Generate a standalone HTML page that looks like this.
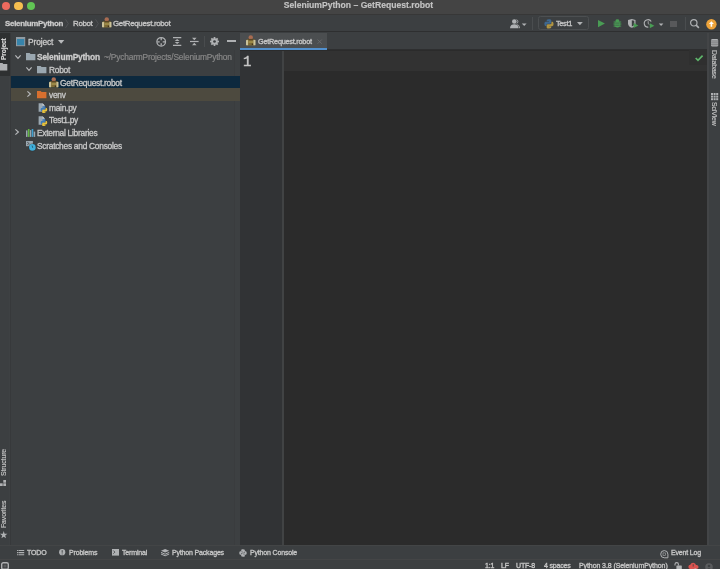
<!DOCTYPE html>
<html><head><meta charset="utf-8">
<style>
*{margin:0;padding:0;box-sizing:border-box}
html,body{width:720px;height:569px;overflow:hidden;background:#3c3f41;font-family:"Liberation Sans",sans-serif;color:#bbbbbb}
.a{position:absolute}
svg{position:absolute;overflow:visible}
.tx{position:absolute;white-space:nowrap;color:#d2d2d2;-webkit-text-stroke:0.32px #c2c2c2}
#title{left:0;top:0;width:720px;height:15.2px;background:#444444;border-bottom:1.3px solid #373737}
.dot{position:absolute;width:8.2px;height:8.2px;border-radius:50%;top:1.7px}
#nav{left:0;top:15.2px;width:720px;height:17.3px;background:#3c3f41;border-bottom:1px solid #2e2f30}
.nv{font-size:7.9px;letter-spacing:-0.31px;line-height:10px;top:4.7px}
#lstrip{z-index:2;left:0;top:32.5px;width:11px;height:512.7px;background:#3c3f41;border-right:1.6px solid #37393b;box-shadow:inset -0.8px 0 0 #404345}
#proj{left:10.5px;top:32.5px;width:229.5px;height:512.5px;background:#3c3f41}
#editor{left:240px;top:32.5px;width:467px;height:512.5px;background:#2b2b2b}
#rstrip{left:707.2px;top:32.5px;width:12.8px;height:512.7px;background:#3c3f41;border-left:2.6px solid #434547}
#bstrip{left:0;top:545.2px;width:720px;height:13.3px;background:#3c3f41;border-top:1.6px solid #434546}
#status{left:0;top:558.5px;width:720px;height:10.5px;background:#3c3f41;border-top:1.5px solid #444546}
.row{position:absolute;left:0;width:229.5px;height:12.6px}
.tr{font-size:8.4px;letter-spacing:-0.27px;line-height:12.6px;top:0.9px}
.sm{font-size:7px;letter-spacing:-0.17px;line-height:10px}
.vt{position:absolute;font-size:6.9px;line-height:8px;white-space:nowrap;transform-origin:0 0;color:#c8c8c8;-webkit-text-stroke:0.2px #bbbbbb;letter-spacing:-0.1px}
.tx,.vt{will-change:transform}</style></head><body>
<!-- title bar -->
<div id="title" class="a">
  <div class="dot" style="left:1.9px;background:#ed6a5e"></div>
  <div class="dot" style="left:14.4px;background:#f5bf4f"></div>
  <div class="dot" style="left:27px;background:#61c554"></div>
  <div class="tx" style="left:0;width:717px;top:0.2px;text-align:center;font-size:8.6px;font-weight:bold;line-height:10px;color:#c4c4c4;-webkit-text-stroke:0.15px #c4c4c4">SeleniumPython – GetRequest.robot</div>
</div>
<!-- nav bar -->
<div id="nav" class="a"><div class="a" style="left:0;top:-1.2px;width:720px;height:18px">
  <div class="tx nv" style="left:4.5px;font-weight:bold;letter-spacing:-0.26px">SeleniumPython</div>
  <svg style="left:65.2px;top:5px" width="4" height="10"><path d="M0.5 0.3 L3.3 4.6 L0.5 8.9" fill="none" stroke="#55585a" stroke-width="0.8"/></svg>
  <div class="tx nv" style="left:72.6px">Robot</div>
  <svg style="left:95px;top:5px" width="4" height="10"><path d="M0.5 0.3 L3.3 4.6 L0.5 8.9" fill="none" stroke="#55585a" stroke-width="0.8"/></svg>
  <svg style="left:101.7px;top:3.4px" width="10" height="11" viewBox="0 0 10 11">
    <ellipse cx="4.75" cy="2.5" rx="2.2" ry="2.2" fill="#a96c52"/>
    <rect x="0.6" y="4.2" width="8.3" height="6.3" rx="0.5" fill="#7d6b36"/>
    <rect x="2.3" y="3.9" width="4.9" height="1.2" fill="#5a4526"/>
    <rect x="0" y="5" width="2.1" height="5.2" rx="0.5" fill="#cbc299"/>
    <rect x="7.4" y="5" width="2.1" height="5.2" rx="0.5" fill="#cbc299"/>
    <rect x="2.5" y="6.2" width="4.5" height="1.6" fill="#a38f4c"/>
    <circle cx="6.4" cy="9.3" r="0.8" fill="#3e2c18"/>
  </svg>
  <div class="tx nv" style="left:112.7px">GetRequest.robot</div>

  <!-- right toolbar -->
  <svg style="left:510.4px;top:4.6px" width="18" height="10" viewBox="0 0 18 10">
    <circle cx="4.3" cy="2.5" r="2.3" fill="#afb1b3"/>
    <path d="M0 9.2 C0.2 6.2 2 5.3 4.3 5.3 C6.6 5.3 8.4 6.2 8.6 9.2Z" fill="#afb1b3"/>
    <path d="M6.6 0.6 a2.2 2.2 0 0 1 0 4 M7.4 5.6 c1.3 0.5 2 1.6 2.1 3.6" fill="none" stroke="#afb1b3" stroke-width="0.9"/>
    <path d="M11.8 4.4 L16.6 4.4 L14.2 7Z" fill="#afb1b3"/>
  </svg>
  <div class="a" style="left:532px;top:2.8px;width:1px;height:13px;background:#4a4d4f"></div>
  <div class="a" style="left:538.2px;top:2.2px;width:50.8px;height:14.3px;border:1px solid #4c4f51;border-radius:2.5px"></div>
  <svg style="left:544.2px;top:4.6px" width="10" height="10" viewBox="0 0 10 10"><g transform="scale(0.62)"><path d="M7.9 0.5 C4.2 0.5 4.4 2.1 4.4 2.1 L4.4 3.8 H8 V4.3 H3 C3 4.3 0.6 4 0.6 7.8 C0.6 11.5 2.7 11.4 2.7 11.4 H4 V9.6 C4 9.6 3.9 7.5 6.1 7.5 H9.7 C9.7 7.5 11.7 7.5 11.7 5.5 V2.3 C11.7 2.3 12 0.5 7.9 0.5Z" fill="#3e6890"/><path d="M8.1 15.5 C11.8 15.5 11.6 13.9 11.6 13.9 L11.6 12.2 H8 V11.7 H13 C13 11.7 15.4 12 15.4 8.2 C15.4 4.5 13.3 4.6 13.3 4.6 H12 V6.4 C12 6.4 12.1 8.5 9.9 8.5 H6.3 C6.3 8.5 4.3 8.5 4.3 10.5 V13.7 C4.3 13.7 4 15.5 8.1 15.5Z" fill="#b09442"/></g></svg>
  <div class="tx nv" style="left:556.3px;font-size:7.4px;letter-spacing:-0.35px">Test1</div>
  <svg style="left:577.2px;top:8px" width="7" height="4"><path d="M0 0 L5.8 0 L2.9 3.2Z" fill="#afb1b3"/></svg>
  <!-- run -->
  <svg style="left:597.6px;top:6px" width="8" height="8"><path d="M0 0 L6.9 3.6 L0 7.2Z" fill="#499c54"/></svg>
  <!-- debug -->
  <svg style="left:612.8px;top:4.9px" width="9" height="9" viewBox="0 0 9 9">
    <path d="M0.6 3 h7.6 M0.4 5 h8 M0.6 7.1 h7.6" stroke="#499c54" stroke-width="0.95"/>
    <ellipse cx="4.4" cy="1.7" rx="1.9" ry="1.4" fill="#499c54"/>
    <ellipse cx="4.4" cy="5.2" rx="2.8" ry="3.3" fill="#499c54"/>
    <path d="M2.2 4.1 h4.4 M2.2 6.2 h4.4" stroke="#3c3f41" stroke-width="0.5"/>
  </svg>
  <!-- coverage -->
  <svg style="left:628.3px;top:4.9px" width="11" height="10" viewBox="0 0 11 10">
    <path d="M0 0.9 L3.8 0 L7.5 0.9 L7.5 4.4 C7.5 6.7 5.8 8 3.8 8.8 C1.8 8 0 6.7 0 4.4Z" fill="#afb1b3"/>
    <path d="M3.8 1.3 L6.3 1.8 L6.3 4.4 C6.3 5.9 5.3 6.9 3.8 7.5Z" fill="#3c3f41"/>
    <path d="M5.6 4.1 L10.4 6.6 L5.6 9.1Z" fill="#499c54"/>
  </svg>
  <!-- profiler -->
  <svg style="left:643.8px;top:4.9px" width="20" height="10" viewBox="0 0 20 10">
    <path d="M7.2 2.6 A3.7 3.7 0 1 0 4.3 8.1" fill="none" stroke="#afb1b3" stroke-width="1.1"/>
    <path d="M4.2 2.2 L4.2 4.6 L5.4 5.6" fill="none" stroke="#afb1b3" stroke-width="0.9"/>
    <path d="M5.8 4.2 L10.4 6.7 L5.8 9.2Z" fill="#499c54"/>
    <path d="M14.8 4.4 L19.4 4.4 L17.1 7Z" fill="#afb1b3"/>
  </svg>
  <!-- stop -->
  <div class="a" style="left:670.4px;top:6.6px;width:6.6px;height:6.6px;background:#58595b"></div>
  <div class="a" style="left:684.5px;top:2.8px;width:1px;height:13px;background:#4a4d4f"></div>
  <!-- search -->
  <svg style="left:690.2px;top:5.2px" width="10" height="10" viewBox="0 0 10 10">
    <circle cx="3.8" cy="3.8" r="3.2" fill="none" stroke="#afb1b3" stroke-width="1.2"/>
    <path d="M6.1 6.1 L8.9 8.9" stroke="#afb1b3" stroke-width="1.6"/>
  </svg>
  <!-- update -->
  <svg style="left:705.6px;top:4.9px" width="11" height="11" viewBox="0 0 11 11">
    <circle cx="5.4" cy="5.2" r="5.2" fill="#eda33a"/>
    <path d="M5.4 2.3 L7.9 5 L6.2 5 L6.2 7.8 L4.6 7.8 L4.6 5 L2.9 5Z" fill="#ffffff"/>
  </svg>
</div></div>

<!-- left strip -->
<div id="lstrip" class="a">
  <div class="a" style="left:0;top:0px;width:9.5px;height:43px;background:#2e3031"></div>
  <div class="vt" style="left:-0.4px;top:27.8px;transform:rotate(-90deg);font-weight:bold;color:#e0e0e0;font-size:6.6px">Project</div>
  <svg style="left:0;top:30.4px" width="8" height="8" viewBox="0 0 8 8"><path d="M-0.5 0 h3 l0.8 1 h4 v6.6 h-7.8z" fill="#afb1b3"/></svg>
  <div class="vt" style="left:-0.2px;top:443.2px;transform:rotate(-90deg)">Structure</div>
  <svg style="left:0.4px;top:447.8px" width="7" height="8" viewBox="0 0 7 8"><rect x="3.3" y="0" width="2.7" height="2.7" fill="#afb1b3"/><rect x="0" y="3.3" width="2.7" height="2.7" fill="#afb1b3"/><rect x="3.3" y="3.3" width="2.7" height="2.7" fill="#afb1b3"/></svg>
  <div class="vt" style="left:-0.2px;top:495.6px;transform:rotate(-90deg)">Favorites</div>
  <svg style="left:0.2px;top:498.2px" width="8" height="8" viewBox="0 0 8 8"><path d="M3.7 0 L4.6 2.7 L7.4 2.8 L5.2 4.5 L6 7.3 L3.7 5.7 L1.4 7.3 L2.2 4.5 L0 2.8 L2.8 2.7Z" fill="#afb1b3"/></svg>
</div>

<!-- project panel -->
<div id="proj" class="a">
  <svg style="left:5.2px;top:4.6px" width="10" height="10" viewBox="0 0 10 10"><rect x="0.5" y="0.5" width="8.2" height="8.2" fill="#3784ab" stroke="#8f9ba3" stroke-width="1"/><rect x="0.5" y="0.5" width="8.2" height="1.5" fill="#8f9ba3"/></svg>
  <div class="tx tr" style="left:17px;top:3.4px;letter-spacing:-0.12px;line-height:12px">Project</div>
  <svg style="left:47.3px;top:7.4px" width="7" height="4"><path d="M0 0 L6.3 0 L3.15 3.7Z" fill="#b8babc"/></svg>
  <!-- header icons -->
  <svg style="left:145.1px;top:4.4px" width="11" height="11" viewBox="0 0 11 11">
    <circle cx="5.2" cy="4.8" r="4.3" fill="none" stroke="#afb1b3" stroke-width="1.25"/>
    <path d="M5.2 1 v2.3 M5.2 6.3 v2.3 M1.4 4.8 h2.3 M6.7 4.8 h2.3" stroke="#afb1b3" stroke-width="1.3"/>
  </svg>
  <svg style="left:162.4px;top:4.1px" width="9" height="10" viewBox="0 0 9 10">
    <path d="M0 0.6 h8.3 M0 8.4 h8.3" stroke="#afb1b3" stroke-width="1.2"/>
    <path d="M4.15 2 L6.6 4.1 L1.7 4.1Z M4.15 7 L6.6 4.9 L1.7 4.9Z" fill="#afb1b3"/>
  </svg>
  <svg style="left:179.3px;top:4.1px" width="9" height="10" viewBox="0 0 9 10">
    <path d="M0 4.5 h8.6" stroke="#afb1b3" stroke-width="1.2"/>
    <path d="M4.3 3.3 L6.6 0.8 L2 0.8Z M4.3 5.7 L6.6 8.2 L2 8.2Z" fill="#afb1b3"/>
  </svg>
  <div class="a" style="left:193.8px;top:3.4px;width:1px;height:11px;background:#494c4e"></div>
  <svg style="left:199.9px;top:4.2px" width="9" height="9" viewBox="0 0 9 9"><circle cx="4.5" cy="4.5" r="3.3" fill="#afb1b3"/><rect x="3.65" y="0" width="1.7" height="9" transform="rotate(0 4.5 4.5)" fill="#afb1b3"/><rect x="3.65" y="0" width="1.7" height="9" transform="rotate(45 4.5 4.5)" fill="#afb1b3"/><rect x="3.65" y="0" width="1.7" height="9" transform="rotate(90 4.5 4.5)" fill="#afb1b3"/><rect x="3.65" y="0" width="1.7" height="9" transform="rotate(135 4.5 4.5)" fill="#afb1b3"/><circle cx="4.5" cy="4.5" r="1.35" fill="#3c3f41"/></svg>
  <div class="a" style="left:216.2px;top:7.9px;width:9px;height:1.6px;background:#afb1b3"></div>

  <div class="a" style="left:223.5px;top:17px;width:6px;height:495.5px;background:#3d4042;border-left:0.6px solid #3a3c3e"></div>
  <!-- tree rows -->
  <div class="row" style="top:18.0px">
    <svg style="left:4.2px;top:4px" width="7" height="5"><path d="M0.4 0.4 L3 3.4 L5.6 0.4" fill="none" stroke="#b8babc" stroke-width="1.15"/></svg>
    <svg style="left:15.3px;top:2.5px" width="10" height="8" viewBox="0 0 10 8"><path d="M0 0 h3.6 l1 1.1 h4.8 v6.2 h-9.4z" fill="#9aa7b0"/></svg>
    <div class="tx tr" style="left:26.8px;font-weight:bold;letter-spacing:-0.2px;color:#d0d0d0">SeleniumPython</div>
    <div class="tx tr" style="left:93.3px;letter-spacing:-0.19px;color:#8c8c8c;-webkit-text-stroke:0.2px #808080">~/PycharmProjects/SeleniumPython</div>
  </div>
  <div class="row" style="top:30.6px">
    <svg style="left:15.5px;top:4px" width="7" height="5"><path d="M0.4 0.4 L3 3.4 L5.6 0.4" fill="none" stroke="#b8babc" stroke-width="1.15"/></svg>
    <svg style="left:26.5px;top:2.5px" width="10" height="8" viewBox="0 0 10 8"><path d="M0 0 h3.6 l1 1.1 h4.8 v6.2 h-9.4z" fill="#9aa7b0"/></svg>
    <div class="tx tr" style="left:38.2px">Robot</div>
  </div>
  <div class="row" style="top:43.2px;background:#0d293e">
    <svg style="left:38.5px;top:1.2px" width="10" height="11" viewBox="0 0 10 11">
      <ellipse cx="4.75" cy="2.5" rx="2.2" ry="2.2" fill="#a96c52"/>
    <rect x="0.6" y="4.2" width="8.3" height="6.3" rx="0.5" fill="#7d6b36"/>
    <rect x="2.3" y="3.9" width="4.9" height="1.2" fill="#5a4526"/>
    <rect x="0" y="5" width="2.1" height="5.2" rx="0.5" fill="#cbc299"/>
    <rect x="7.4" y="5" width="2.1" height="5.2" rx="0.5" fill="#cbc299"/>
    <rect x="2.5" y="6.2" width="4.5" height="1.6" fill="#a38f4c"/>
    <circle cx="6.4" cy="9.3" r="0.8" fill="#3e2c18"/>
    </svg>
    <div class="tx tr" style="left:49.9px">GetRequest.robot</div>
  </div>
  <div class="row" style="top:55.8px;background:#4d4a3f">
    <svg style="left:16.4px;top:3.2px" width="5" height="7"><path d="M0.4 0.4 L3.4 3 L0.4 5.6" fill="none" stroke="#b8babc" stroke-width="1.15"/></svg>
    <svg style="left:26.4px;top:2.5px" width="10" height="8" viewBox="0 0 10 8"><path d="M0 0 h3.6 l1 1.1 h4.8 v6.2 h-9.4z" fill="#d8702e"/></svg>
    <div class="tx tr" style="left:38.4px">venv</div>
  </div>
  <div class="row" style="top:68.4px">
    <svg style="left:27.8px;top:2px" width="10" height="10" viewBox="0 0 10 10">
      <path d="M0.6 0.3 h3.9 l2.2 2.2 v6.3 h-6.1z" fill="#9aa7b0"/>
      <path d="M4.5 0.3 v2.2 h2.2z" fill="#c5ccd1"/>
      <g transform="translate(2.4,3.1) scale(0.44)"><path d="M8.1 15.5 C11.8 15.5 11.6 13.9 11.6 13.9 L11.6 12.2 H8 V11.7 H13 C13 11.7 15.4 12 15.4 8.2 C15.4 4.5 13.3 4.6 13.3 4.6 H12 V6.4 C12 6.4 12.1 8.5 9.9 8.5 H6.3 C6.3 8.5 4.3 8.5 4.3 10.5 V13.7 C4.3 13.7 4 15.5 8.1 15.5Z" fill="#e8c23c" stroke="#3c3f41" stroke-width="1.2"/><path d="M7.9 0.5 C4.2 0.5 4.4 2.1 4.4 2.1 L4.4 3.8 H8 V4.3 H3 C3 4.3 0.6 4 0.6 7.8 C0.6 11.5 2.7 11.4 2.7 11.4 H4 V9.6 C4 9.6 3.9 7.5 6.1 7.5 H9.7 C9.7 7.5 11.7 7.5 11.7 5.5 V2.3 C11.7 2.3 12 0.5 7.9 0.5Z" fill="#3d7ab8"/><path d="M8.1 15.5 C11.8 15.5 11.6 13.9 11.6 13.9 L11.6 12.2 H8 V11.7 H13 C13 11.7 15.4 12 15.4 8.2 C15.4 4.5 13.3 4.6 13.3 4.6 H12 V6.4 C12 6.4 12.1 8.5 9.9 8.5 H6.3 C6.3 8.5 4.3 8.5 4.3 10.5 V13.7 C4.3 13.7 4 15.5 8.1 15.5Z" fill="#e8c23c"/></g>
    </svg>
    <div class="tx tr" style="left:38.4px">main.py</div>
  </div>
  <div class="row" style="top:81.0px">
    <svg style="left:27.8px;top:2px" width="10" height="10" viewBox="0 0 10 10">
      <path d="M0.6 0.3 h3.9 l2.2 2.2 v6.3 h-6.1z" fill="#9aa7b0"/>
      <path d="M4.5 0.3 v2.2 h2.2z" fill="#c5ccd1"/>
      <g transform="translate(2.4,3.1) scale(0.44)"><path d="M8.1 15.5 C11.8 15.5 11.6 13.9 11.6 13.9 L11.6 12.2 H8 V11.7 H13 C13 11.7 15.4 12 15.4 8.2 C15.4 4.5 13.3 4.6 13.3 4.6 H12 V6.4 C12 6.4 12.1 8.5 9.9 8.5 H6.3 C6.3 8.5 4.3 8.5 4.3 10.5 V13.7 C4.3 13.7 4 15.5 8.1 15.5Z" fill="#e8c23c" stroke="#3c3f41" stroke-width="1.2"/><path d="M7.9 0.5 C4.2 0.5 4.4 2.1 4.4 2.1 L4.4 3.8 H8 V4.3 H3 C3 4.3 0.6 4 0.6 7.8 C0.6 11.5 2.7 11.4 2.7 11.4 H4 V9.6 C4 9.6 3.9 7.5 6.1 7.5 H9.7 C9.7 7.5 11.7 7.5 11.7 5.5 V2.3 C11.7 2.3 12 0.5 7.9 0.5Z" fill="#3d7ab8"/><path d="M8.1 15.5 C11.8 15.5 11.6 13.9 11.6 13.9 L11.6 12.2 H8 V11.7 H13 C13 11.7 15.4 12 15.4 8.2 C15.4 4.5 13.3 4.6 13.3 4.6 H12 V6.4 C12 6.4 12.1 8.5 9.9 8.5 H6.3 C6.3 8.5 4.3 8.5 4.3 10.5 V13.7 C4.3 13.7 4 15.5 8.1 15.5Z" fill="#e8c23c"/></g>
    </svg>
    <div class="tx tr" style="left:38.4px">Test1.py</div>
  </div>
  <div class="row" style="top:93.6px">
    <svg style="left:4.8px;top:3.4px" width="5" height="7"><path d="M0.4 0.4 L3.4 3 L0.4 5.6" fill="none" stroke="#b8babc" stroke-width="1.15"/></svg>
    <svg style="left:15.4px;top:2.5px" width="10" height="9" viewBox="0 0 10 9">
      <rect x="0" y="1.4" width="1.5" height="6.5" fill="#9aa7b0"/>
      <rect x="1.9" y="0" width="1.6" height="7.9" fill="#62b543"/>
      <rect x="3.9" y="1.1" width="1.4" height="6.8" fill="#9aa7b0"/>
      <rect x="5.7" y="0" width="1.6" height="7.9" fill="#40a0d0"/>
      <rect x="7.7" y="2.6" width="1.5" height="5.3" fill="#9aa7b0"/>
    </svg>
    <div class="tx tr" style="left:26.8px">External Libraries</div>
  </div>
  <div class="row" style="top:106.2px">
    <svg style="left:15.4px;top:2.4px" width="11" height="11" viewBox="0 0 11 11">
      <rect x="0" y="0" width="6.9" height="5.2" fill="#9aa7b0"/>
      <path d="M1.2 1.2 l2 1.3 l-2 1.3" fill="none" stroke="#3c3f41" stroke-width="0.7"/>
      <circle cx="6.4" cy="6.4" r="3.9" fill="#2b2b2b" opacity="0.6"/>
      <circle cx="6.4" cy="6.4" r="3.3" fill="#40b0dc"/>
      <path d="M6.1 4.6 l0.6 2.2" fill="none" stroke="#1d3d50" stroke-width="0.7"/>
    </svg>
    <div class="tx tr" style="left:26.8px">Scratches and Consoles</div>
  </div>
</div>

<!-- editor -->
<div id="editor" class="a">
  <div class="a" style="left:0;top:0;width:467px;height:17.6px;background:#3c3f41;border-bottom:0.6px solid #2e2f30"></div>
  <div class="a" style="left:0;top:0;width:87px;height:17px;background:#4b4e50"></div>
  <div class="a" style="left:0;top:15.2px;width:87px;height:2.6px;background:#5290cd"></div>
  <svg style="left:5.7px;top:2.6px" width="10" height="11" viewBox="0 0 10 11">
    <ellipse cx="4.75" cy="2.5" rx="2.2" ry="2.2" fill="#a96c52"/>
    <rect x="0.6" y="4.2" width="8.3" height="6.3" rx="0.5" fill="#7d6b36"/>
    <rect x="2.3" y="3.9" width="4.9" height="1.2" fill="#5a4526"/>
    <rect x="0" y="5" width="2.1" height="5.2" rx="0.5" fill="#cbc299"/>
    <rect x="7.4" y="5" width="2.1" height="5.2" rx="0.5" fill="#cbc299"/>
    <rect x="2.5" y="6.2" width="4.5" height="1.6" fill="#a38f4c"/>
    <circle cx="6.4" cy="9.3" r="0.8" fill="#3e2c18"/>
  </svg>
  <div class="tx" style="left:17.8px;top:4.2px;font-size:7.3px;letter-spacing:-0.24px;line-height:10px">GetRequest.robot</div>
  <svg style="left:76.6px;top:6px" width="6" height="6"><path d="M0.5 0.5 L4.8 4.8 M4.8 0.5 L0.5 4.8" stroke="#696b6d" stroke-width="0.8"/></svg>
  <!-- gutter -->
  <div class="a" style="left:0;top:18px;width:42px;height:494.5px;background:#313335"></div>
  <div class="a" style="left:42px;top:18px;width:2px;height:494.5px;background:#414344"></div>
  <div class="a" style="left:44px;top:18.5px;width:423px;height:20px;background:#323232"></div>
  <div class="a" style="left:3.4px;top:21.8px;font-family:'Liberation Mono',monospace;font-size:14px;line-height:16px;color:#cccccc;-webkit-text-stroke:0.45px #c0c0c0;will-change:transform">1</div>
  <div class="a" style="left:449px;top:17.6px;width:18px;height:14.5px;background:#2f2f2f"></div>
  <svg style="left:455px;top:22.6px" width="9" height="7" viewBox="0 0 9 7"><path d="M0.7 3 L3 5.3 L7.6 0.7" fill="none" stroke="#5eb56a" stroke-width="1.7"/></svg>
</div>

<!-- right strip -->
<div id="rstrip" class="a">
  <svg style="left:1.5px;top:6.8px" width="8" height="8" viewBox="0 0 8 8">
    <rect x="0" y="0" width="7.2" height="7.6" rx="1.4" fill="#afb1b3"/>
    <path d="M0 2 h7.2 M0 3.9 h7.2 M0 5.8 h7.2" stroke="#3c3f41" stroke-width="0.5"/>
  </svg>
  <div class="vt" style="left:8.6px;top:17px;transform:rotate(90deg)">Database</div>
  <svg style="left:1.5px;top:60px" width="8" height="8" viewBox="0 0 8 8">
    <rect x="0" y="0" width="2" height="2" fill="#afb1b3"/><rect x="2.6" y="0" width="2" height="2" fill="#afb1b3"/><rect x="5.2" y="0" width="2" height="2" fill="#afb1b3"/>
    <rect x="0" y="2.6" width="2" height="2" fill="#afb1b3"/><rect x="2.6" y="2.6" width="2" height="2" fill="#afb1b3"/><rect x="5.2" y="2.6" width="2" height="2" fill="#afb1b3"/>
    <rect x="0" y="5.2" width="2" height="2" fill="#afb1b3"/><rect x="2.6" y="5.2" width="2" height="2" fill="#afb1b3"/><rect x="5.2" y="5.2" width="2" height="2" fill="#afb1b3"/>
  </svg>
  <div class="vt" style="left:8.6px;top:69.6px;transform:rotate(90deg)">SciView</div>
</div>

<!-- bottom tool strip -->
<div id="bstrip" class="a">
  <svg style="left:17px;top:3.8px" width="8" height="7" viewBox="0 0 8 7"><path d="M0 0.5 h7.2 M0 2.6 h7.2 M0 4.7 h7.2" stroke="#afb1b3" stroke-width="1.1"/><path d="M1.4 0 v6" stroke="#3c3f41" stroke-width="0.5"/></svg>
  <div class="tx sm" style="left:26.7px;top:2px">TODO</div>
  <svg style="left:59.2px;top:3px" width="7" height="7" viewBox="0 0 7 7"><circle cx="3.2" cy="3.2" r="3.1" fill="#afb1b3"/><path d="M3.2 1.2 v2.5 M3.2 4.5 v0.9" stroke="#3c3f41" stroke-width="0.9"/></svg>
  <div class="tx sm" style="left:69px;top:2px">Problems</div>
  <svg style="left:111.8px;top:3px" width="7" height="7" viewBox="0 0 7 7"><rect x="0" y="0" width="7" height="6.6" fill="#afb1b3"/><path d="M1.3 1.5 l1.6 1.6 l-1.6 1.6" fill="none" stroke="#3c3f41" stroke-width="0.8"/></svg>
  <div class="tx sm" style="left:122px;top:2px">Terminal</div>
  <svg style="left:161.3px;top:2.8px" width="9" height="8" viewBox="0 0 9 8"><path d="M4.1 0 L8.2 1.8 L4.1 3.6 L0 1.8Z" fill="#afb1b3"/><path d="M0 3.4 L4.1 5.2 L8.2 3.4 M0 5 L4.1 6.8 L8.2 5" fill="none" stroke="#afb1b3" stroke-width="1"/></svg>
  <div class="tx sm" style="left:172.3px;top:2px">Python Packages</div>
  <svg style="left:239.4px;top:2.6px" width="8" height="8" viewBox="0 0 8 8"><g transform="scale(0.5)"><path d="M7.9 0.5 C4.2 0.5 4.4 2.1 4.4 2.1 L4.4 3.8 H8 V4.3 H3 C3 4.3 0.6 4 0.6 7.8 C0.6 11.5 2.7 11.4 2.7 11.4 H4 V9.6 C4 9.6 3.9 7.5 6.1 7.5 H9.7 C9.7 7.5 11.7 7.5 11.7 5.5 V2.3 C11.7 2.3 12 0.5 7.9 0.5Z" fill="#afb1b3"/><path d="M8.1 15.5 C11.8 15.5 11.6 13.9 11.6 13.9 L11.6 12.2 H8 V11.7 H13 C13 11.7 15.4 12 15.4 8.2 C15.4 4.5 13.3 4.6 13.3 4.6 H12 V6.4 C12 6.4 12.1 8.5 9.9 8.5 H6.3 C6.3 8.5 4.3 8.5 4.3 10.5 V13.7 C4.3 13.7 4 15.5 8.1 15.5Z" fill="#afb1b3"/></g></svg>
  <div class="tx sm" style="left:250px;top:2px">Python Console</div>
  <svg style="left:660.4px;top:3.4px" width="9" height="8" viewBox="0 0 9 8"><path d="M4.3 0.6 A3.6 3.6 0 1 0 4.3 7.8 H7.9 V4.2 A3.6 3.6 0 0 0 4.3 0.6Z" fill="none" stroke="#afb1b3" stroke-width="1"/><rect x="3" y="2.9" width="2.6" height="2.6" fill="none" stroke="#afb1b3" stroke-width="0.6"/></svg>
  <div class="tx sm" style="left:670.6px;top:2px">Event Log</div>
</div>

<!-- status bar -->
<div id="status" class="a">
  <svg style="left:1.3px;top:2.6px" width="8" height="8" viewBox="0 0 8 8"><rect x="0.7" y="0.7" width="6.6" height="6.6" rx="1.6" fill="none" stroke="#afb1b3" stroke-width="1.4"/><rect x="2.6" y="2.6" width="2.8" height="2.8" fill="#5a5c5e"/></svg>
  <div class="tx sm" style="left:485.4px;top:1.2px">1:1</div>
  <div class="tx sm" style="left:500.6px;top:1.2px">LF</div>
  <div class="tx sm" style="left:515.6px;top:1.2px">UTF-8</div>
  <div class="tx sm" style="left:543.6px;top:1.2px">4 spaces</div>
  <div class="tx sm" style="left:579.2px;top:1.2px;letter-spacing:-0.09px">Python 3.8 (SeleniumPython)</div>
  <svg style="left:673.8px;top:2.8px" width="9" height="9" viewBox="0 0 9 9"><path d="M1 3.6 v-1.3 a1.7 1.7 0 0 1 3.4 0 v1.3" fill="none" stroke="#afb1b3" stroke-width="1.1"/><rect x="2.4" y="3.6" width="5.4" height="5" rx="0.4" fill="#afb1b3"/></svg>
  <svg style="left:688px;top:2.2px" width="11" height="9" viewBox="0 0 11 9"><path d="M2 7 a2.2 2.2 0 0 1 0.3 -4.3 a3 3 0 0 1 5.7 0.4 a2 2 0 0 1 1 3.9z" fill="#d9534f"/><path d="M5.2 2.2 v2.4" stroke="#3c3f41" stroke-width="0.8"/><circle cx="7.3" cy="7.8" r="1.5" fill="#afb1b3"/></svg>
  <svg style="left:705px;top:3px" width="9" height="9" viewBox="0 0 9 9"><circle cx="4" cy="4" r="3.8" fill="#5a5c5e"/><circle cx="4" cy="3" r="1.3" fill="#3c3f41"/><path d="M1.8 6.8 a2.3 2.3 0 0 1 4.4 0" fill="#3c3f41"/></svg>
</div>
</body></html>
